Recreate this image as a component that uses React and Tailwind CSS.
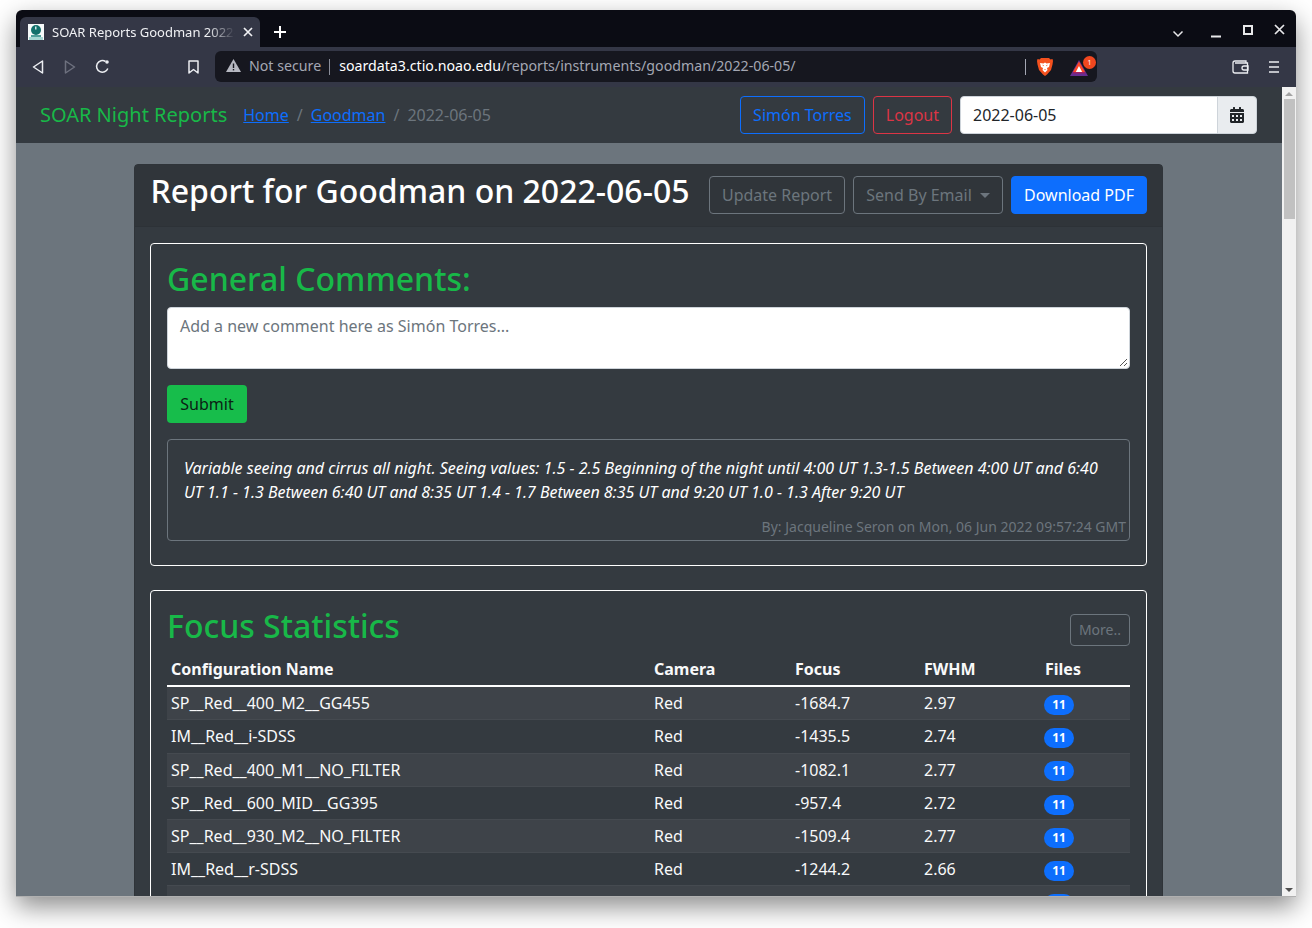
import { FaCalendarAlt } from 'react-icons/fa';

const rows = [
  ['SP__Red__400_M2__GG455', 'Red', '-1684.7', '2.97'],
  ['IM__Red__i-SDSS', 'Red', '-1435.5', '2.74'],
  ['SP__Red__400_M1__NO_FILTER', 'Red', '-1082.1', '2.77'],
  ['SP__Red__600_MID__GG395', 'Red', '-957.4', '2.72'],
  ['SP__Red__930_M2__NO_FILTER', 'Red', '-1509.4', '2.77'],
  ['IM__Red__r-SDSS', 'Red', '-1244.2', '2.66'],
  ['SP__Red__1200_M5__GG495', 'Red', '-1100.3', '2.70'],
];

function TabStrip() {
  return (
    <div className="h-[37px] bg-[#0b0c14] flex items-end pl-1 shrink-0">
      <div className="w-[240px] h-[30px] bg-[#343746] rounded-t-md flex items-center pl-2 pr-[7px]">
        <svg width="16" height="16" viewBox="0 0 16 16" className="shrink-0">
          <rect width="16" height="16" fill="#f6fafa" />
          <circle cx="8" cy="6" r="5" fill="#12706c" />
          <rect x="7" y="2.500" width="1.500" height="3" fill="#cfe6e4" />
          <rect x="3" y="11" width="10" height="2" fill="#4f9f9b" />
          <rect x="1" y="13" width="14" height="3" fill="#a5d6d3" />
        </svg>
        <div className="ml-2 w-[183px] overflow-hidden whitespace-nowrap text-[13px] leading-[18px] text-[#f0f1f4] [mask-image:linear-gradient(to_right,black_85%,transparent)]">SOAR Reports Goodman 2022-06-05</div>
        <svg width="10" height="10" viewBox="0 0 10 10" className="ml-auto" stroke="#f0f1f4" strokeWidth="1.7">
          <path d="M1 1l8 8M9 1l-8 8" />
        </svg>
      </div>
      <svg width="12" height="12" viewBox="0 0 12 12" className="ml-[14px] mb-[9px]" stroke="#fff" strokeWidth="2">
        <path d="M6 0v12M0 6h12" />
      </svg>
      <div className="ml-auto flex items-center mb-[9px] text-white">
        <svg width="12" height="8" viewBox="0 0 12 8" fill="none" stroke="#e8e8ea" strokeWidth="1.5" className="mt-[6px]">
          <path d="M1.500 1.500L6 6l4.500-4.500" />
        </svg>
        <svg width="12" height="12" viewBox="0 0 12 12" className="ml-[26px] mt-[2px]" stroke="#e8e8ea" strokeWidth="2">
          <path d="M1 10.500h10" />
        </svg>
        <svg width="10" height="10" viewBox="0 0 10 10" fill="none" className="ml-[21px] mb-[3px]" stroke="#e8e8ea" strokeWidth="2">
          <rect x="1" y="1" width="8" height="8" />
        </svg>
        <svg width="11" height="11" viewBox="0 0 11 11" className="ml-[21px] mr-[11px] mb-[3px]" stroke="#e8e8ea" strokeWidth="1.700">
          <path d="M1 1l9 9M10 1l-9 9" />
        </svg>
      </div>
    </div>
  );
}

function Toolbar() {
  return (
    <div className="h-[40px] bg-[#343746] flex items-center pb-px shrink-0">
      <svg width="12" height="14" viewBox="0 0 12 14" fill="none" stroke="#eceef2" strokeWidth="1.500" className="ml-4">
        <path d="M10.500 1v12L1.500 7z" strokeLinejoin="round" />
      </svg>
      <svg width="12" height="14" viewBox="0 0 12 14" fill="none" stroke="#6d707e" strokeWidth="1.500" className="ml-5">
        <path d="M1.500 1v12l9-6z" strokeLinejoin="round" />
      </svg>
      <svg width="15" height="15" viewBox="0 0 15 15" fill="none" stroke="#eceef2" strokeWidth="1.500" className="ml-[19px]">
        <path d="M12.800 9.500A5.800 5.800 0 1 1 10.500 2.500" />
        <circle cx="12" cy="3" r="1.800" fill="#eceef2" stroke="none" />
      </svg>
      <svg width="11" height="14" viewBox="0 0 11 14" fill="none" stroke="#eceef2" strokeWidth="1.500" className="ml-[78px]">
        <path d="M1 1h9v12L5.500 9.500 1 13z" strokeLinejoin="round" />
      </svg>
      <div className="ml-4 w-[882px] h-[31px] rounded-md bg-[#16171f] flex items-center text-[14.2px] leading-[20px]">
        <svg width="15" height="13" viewBox="0 0 15 13" className="ml-[11px] -mt-[2px]">
          <path d="M7.500 0L15 13H0z" fill="#b6b8c1" />
          <rect x="6.800" y="4.500" width="1.400" height="4.500" fill="#16171f" />
          <rect x="6.800" y="10" width="1.400" height="1.400" fill="#16171f" />
        </svg>
        <span className="ml-2 text-[#a4a7b3] -mt-px">Not secure</span>
        <div className="ml-2 w-px h-4 bg-[#8a8d99]" />
        <span className="ml-[9px] text-white -mt-px">soardata3.ctio.noao.edu<span className="text-[#a4a7b3]">/reports/instruments/goodman/2022-06-05/</span></span>
        <div className="ml-auto w-px h-4 bg-[#a4a7b3]" />
        <svg width="16" height="18" viewBox="0 0 16 18" className="ml-[11px]">
          <path d="M4 0h8l1.500 1.500L15.500 1 16 3l-.5 3.500L14 12l-4 4.500L8 18l-2-1.500L2 12 .5 6.500 0 3l.5-2 2 .5z" fill="#f4511e" />
          <path d="M3 5l3.500.5L8 4.500l1.500 1L13 5l-1 4-2 1 .5 2L8 14.500 5.500 12l.5-2-2-1z" fill="#fff" />
          <path d="M5.500 6.500l1.500 1-1 .8zM10.500 6.500L9 7.500l1 .8zM7 11h2l-1 1z" fill="#f4511e" />
        </svg>
        <div className="relative ml-[17px] mr-[9px] w-[18px] h-[16px] mt-[2px]">
          <svg width="18" height="16" viewBox="0 0 18 16" className="block">
            <path d="M9 0l9 16H0z" fill="#662d91" />
            <path d="M9 1.500l6 10.500H3z" fill="#ff4724" />
            <path d="M9 6l3.200 6H5.800z" fill="#fff" />
            <path d="M2.500 13.500h13l-1-1.500h-11z" fill="#9e1f63" />
          </svg>
          <div className="absolute -top-[4px] -right-[8px] w-[13px] h-[13px] rounded-full bg-[#f1471f] text-white text-[7px] leading-[13px] text-center">1</div>
        </div>
      </div>
      <svg width="17" height="14" viewBox="0 0 17 14" fill="none" stroke="#eceef2" strokeWidth="1.300" className="ml-[135px]">
        <path d="M14 3V1H3a2 2 0 0 0-2 2v8a2 2 0 0 0 2 2h12.500V3H3" />
        <path d="M16 6h-4a1.500 1.500 0 0 0 0 4h4z" />
      </svg>
      <svg width="10" height="12" viewBox="0 0 10 12" stroke="#eceef2" strokeWidth="1.500" className="ml-5">
        <path d="M0 1h10M0 6h10M0 11h10" />
      </svg>
    </div>
  );
}

function Navbar() {
  return (
    <nav className="h-14 bg-[#343a40] flex items-center pl-6 pr-[25px] shrink-0">
      <span className="text-[20px] text-[#18b848]">SOAR Night Reports</span>
      <div className="ml-4 flex items-center text-[#6c757d]">
        <a className="text-[#0d6efd] underline">Home</a>
        <span className="px-2">/</span>
        <a className="text-[#0d6efd] underline">Goodman</a>
        <span className="px-2">/</span>
        <span>2022-06-05</span>
      </div>
      <button className="ml-auto h-[38px] px-3 border border-[#0d6efd] rounded text-[#0d6efd]">Simón Torres</button>
      <button className="ml-2 h-[38px] px-3 border border-[#dc3545] rounded text-[#dc3545]">Logout</button>
      <div className="ml-2 flex w-[297px] h-[38px]">
        <div className="flex-1 bg-white rounded-l border border-[#ced4da] px-3 leading-[36px] text-[#212529]">2022-06-05</div>
        <div className="w-[40px] -ml-px bg-[#e9ecef] border border-[#ced4da] rounded-r flex items-center justify-center text-[#212529]">
          <FaCalendarAlt size={16} />
        </div>
      </div>
    </nav>
  );
}

function Report() {
  return (
    <div className="ml-[118px] mr-[119px] mt-[21px] bg-[#343a40] rounded border border-[#2f3439]">
      <div className="h-[62px] bg-[#30353a] border-b border-[#2d3237] flex items-start pl-[15.500px] pr-[15px] pt-[11px]">
        <h2 className="text-[32px] font-medium leading-[32px] -mt-px text-white">Report for Goodman on 2022-06-05</h2>
        <button className="ml-auto h-[38px] w-[136px] border border-[#6c757d] rounded text-[#6c757d]">Update Report</button>
        <button className="ml-2 h-[38px] w-[150px] border border-[#6c757d] rounded text-[#6c757d] flex items-center justify-center">
          Send By Email
          <span className="ml-2 border-x-[5px] border-x-transparent border-t-[5px] border-t-[#6c757d]" />
        </button>
        <button className="ml-2 h-[38px] px-3 bg-[#0d6efd] border border-[#0d6efd] rounded text-white">Download PDF</button>
      </div>
      <div className="px-[15px] pt-4">
        <section className="h-[323px] border border-white rounded px-4 pt-[16px]">
          <h3 className="text-[32px] font-medium leading-[38px] text-[#18b848]">General Comments:</h3>
          <div className="mt-[9px] h-[62px] bg-white rounded border border-[#ced4da] px-3 py-[6px] text-[#6c757d] relative">
            Add a new comment here as Simón Torres...
            <svg width="10" height="10" viewBox="0 0 10 10" className="absolute right-px bottom-px" stroke="#555" strokeWidth="1">
              <path d="M9 2L2 9M9 6L6 9" />
            </svg>
          </div>
          <button className="mt-4 h-[38px] w-[80px] bg-[#17bd4b] rounded text-[#0b2214] block">Submit</button>
          <div className="mt-4 h-[102px] border border-[#6c757d] rounded pl-4 pr-[3px] pt-4">
            <p className="italic leading-6 text-white pr-[10px]">Variable seeing and cirrus all night. Seeing values: 1.5 - 2.5 Beginning of the night until 4:00 UT 1.3-1.5 Between 4:00 UT and 6:40 UT 1.1 - 1.3 Between 6:40 UT and 8:35 UT 1.4 - 1.7 Between 8:35 UT and 9:20 UT 1.0 - 1.3 After 9:20 UT</p>
            <p className="mt-[12px] text-right text-[14px] leading-[21px] text-[#6c757d]">By: Jacqueline Seron on Mon, 06 Jun 2022 09:57:24 GMT</p>
          </div>
        </section>
        <section className="mt-6 border border-white rounded px-4 pt-[16px]">
          <div className="flex items-start">
            <h3 className="text-[32px] font-medium leading-[38px] text-[#18b848]">Focus Statistics</h3>
            <button className="ml-auto mt-[7px] h-[32px] px-2 pb-[2px] border border-[#6c757d] rounded text-[14px] text-[#6c757d]">More..</button>
          </div>
          <table className="mt-[7.4px] w-full table-fixed text-[#f8f9fa]">
            <colgroup>
              <col className="w-[483px]" />
              <col className="w-[141px]" />
              <col className="w-[129px]" />
              <col className="w-[121px]" />
              <col />
            </colgroup>
            <thead>
              <tr className="border-b-2 border-white text-left">
                <th className="p-1 font-bold leading-6">Configuration Name</th>
                <th className="p-1 font-bold leading-6">Camera</th>
                <th className="p-1 font-bold leading-6">Focus</th>
                <th className="p-1 font-bold leading-6">FWHM</th>
                <th className="p-1 font-bold leading-6">Files</th>
              </tr>
            </thead>
            <tbody>
              {rows.map((row, i) => (
                <tr key={row[0]} className={`h-[33.2px] border-b border-[#454a50] ${i % 2 === 0 ? 'bg-[#3e4349]' : ''}`}>
                  {row.map((cell, j) => (
                    <td key={j} className="p-1 leading-6">{cell}</td>
                  ))}
                  <td className="p-1 leading-6">
                    <span className="inline-block -ml-px w-[30px] h-5 rounded-full bg-[#0d6efd] text-white text-[12px] leading-5 font-bold text-center align-middle">11</span>
                  </td>
                </tr>
              ))}
            </tbody>
          </table>
        </section>
      </div>
    </div>
  );
}

function Scrollbar() {
  return (
    <div className="w-[14px] bg-[#f1f1f1] flex flex-col items-center shrink-0">
      <span className="mt-[5px] border-x-[4px] border-x-transparent border-b-[4px] border-b-[#a3a3a3]" />
      <div className="mt-[3px] w-[11px] h-[120px] bg-[#c1c1c1]" />
      <span className="mt-auto mb-[4px] border-x-[4px] border-x-transparent border-t-[4px] border-t-[#505050]" />
    </div>
  );
}

export default function App() {
  return (
    <div className="w-[1312px] h-[928px] bg-white overflow-hidden pt-[10px] pl-4 font-['Noto_Sans',sans-serif] text-base">
      <div className="w-[1280px] h-[887px] rounded-t-md overflow-hidden flex flex-col border-b border-[#b0b0b0] shadow-[0_10px_26px_rgba(0,0,0,0.45)]">
        <TabStrip />
        <Toolbar />
        <div className="flex-1 flex min-h-0">
          <main className="flex-1 bg-[#6c757d] overflow-hidden">
            <Navbar />
            <Report />
          </main>
          <Scrollbar />
        </div>
      </div>
    </div>
  );
}
